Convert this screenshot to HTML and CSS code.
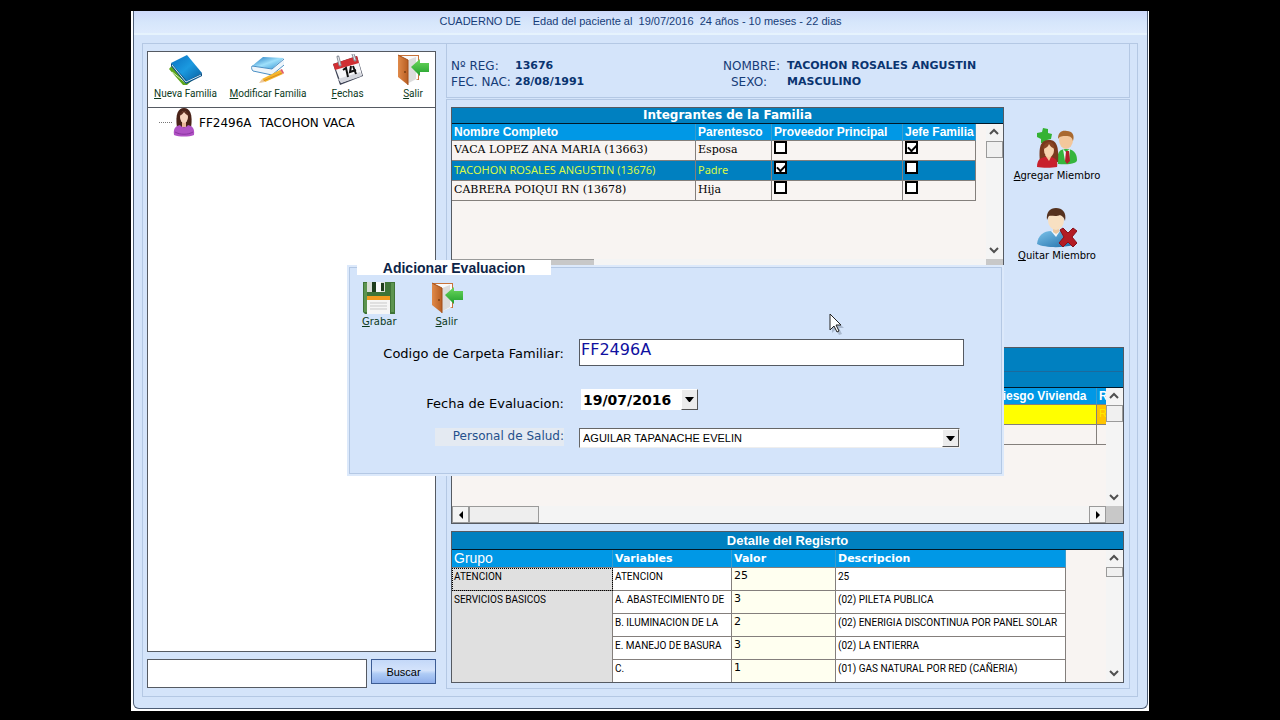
FILE: index.html
```html
<!DOCTYPE html>
<html lang="es">
<head>
<meta charset="utf-8">
<title>Carpeta Familiar</title>
<link rel="stylesheet" href="styles.css">
</head>
<body>
<svg class="defs" aria-hidden="true">
  <defs>
    <linearGradient id="blue" x1="0" y1="0" x2="1" y2="1"><stop offset="0" stop-color="#0a6fc0"/><stop offset=".5" stop-color="#1b9ae0"/><stop offset="1" stop-color="#075a9c"/></linearGradient>
    <linearGradient id="sky" x1="0" y1="0" x2="1" y2="1"><stop offset="0" stop-color="#1673bd"/><stop offset=".5" stop-color="#9fe0fb"/><stop offset="1" stop-color="#2a8fd0"/></linearGradient>
    <linearGradient id="wood" x1="0" y1="0" x2="1" y2="0"><stop offset="0" stop-color="#e08a4a"/><stop offset="1" stop-color="#b85e22"/></linearGradient>
    <linearGradient id="arrow" x1="0" y1="0" x2="0" y2="1"><stop offset="0" stop-color="#6fd95f"/><stop offset="1" stop-color="#1f9e2c"/></linearGradient>
    <linearGradient id="shirt" x1="0" y1="0" x2="1" y2="1"><stop offset="0" stop-color="#7cc3ea"/><stop offset="1" stop-color="#1e6da8"/></linearGradient>
  </defs>
  <symbol id="door" viewBox="0 0 32 32">
    <path d="M2 1h20v25H8z" fill="#c8733a"/><path d="M4 2h17v23l-9 4z" fill="#fafafa"/>
    <path d="M11 6l8-3v22l-9 5z" fill="#dcdcdc"/>
    <path d="M1 1l10 5v25l-10-8z" fill="url(#wood)"/><path d="M1 1l10 5v25" fill="none" stroke="#a34f18"/>
    <circle cx="8" cy="18" r="1" fill="#7a3c10"/>
    <path d="M14 13l9-8v4h9v9h-9v4z" fill="url(#arrow)"/>
  </symbol>
  <symbol id="up" viewBox="0 0 10 10"><path d="M1 7l4-4 4 4" fill="none" stroke="#505050" stroke-width="2"/></symbol>
  <symbol id="down" viewBox="0 0 10 10"><path d="M1 3l4 4 4-4" fill="none" stroke="#505050" stroke-width="2"/></symbol>
</svg>

<div class="window">
  <div class="surface">
    <header class="titlebar">
      <span>CUADERNO DE</span>
      <span>Edad del paciente al&nbsp; 19/07/2016&nbsp; 24 años - 10 meses - 22 dias</span>
    </header>

    <main class="frame">
      <section class="sidebar">
        <div class="tree">
          <nav class="toolbar">
            <button class="tool" type="button">
              <svg width="36" height="32" viewBox="0 0 36 32"><path d="M1 15l5-6 24 12-11 10-4 0z" fill="#5ea61c"/><path d="M4 18l14 11 12-8" fill="none" stroke="#d9efc0"/><path d="M3 9L19 1l15 18-15 9z" fill="url(#blue)"/><path d="M3 9v3l15 18 16-8v-3l-15 8z" fill="#084f86"/><path d="M4 11l14 17 15-7" fill="none" stroke="#cfe6f5"/></svg>
              <span><u>N</u>ueva Familia</span>
            </button>
            <button class="tool" type="button">
              <svg width="36" height="32" viewBox="0 0 36 32"><path d="M2 12L13 3l21 1-12 11z" fill="url(#sky)"/><path d="M2 12l20 3 12-11v6L22 21 3 17z" fill="#eef5fb"/><path d="M2 12l20 3 12-10M3 17l19 4 12-10M2 12c-1 2 0 4 1 5" fill="none" stroke="#4a8fc4"/><path d="M12 25l18-9 3 4-18 8z" fill="#f5b62c"/><path d="M13 27l19-8" stroke="#d98a1e"/><path d="M12 25l3 3-6 1z" fill="#edc89a"/><path d="M30 16l2-1 2 4-1 1z" fill="#e05a6a"/></svg>
              <span><u>M</u>odificar Familia</span>
            </button>
            <button class="tool" type="button">
              <svg width="32" height="32" viewBox="0 0 32 32"><path d="M1 10l24-8 6 20-23 9z" fill="#3c4254"/><path d="M3 13l23-7 4 15-21 8z" fill="#f7f7f9"/><path d="M1 10l24-8 2 7L3 16z" fill="#d02f33"/><path d="M6 25l22-7 2 4-21 7z" fill="#d5d7de"/><path d="M6 3l2 8M21 0l2 6" stroke="#8d939d" stroke-width="3" stroke-linecap="round"/><path d="M6 3l2 8M21 0l2 6" stroke="#eceef0"/><path d="M11 16l3-2 2 9M19 12l-1 6 6-2M21 12l3 8" fill="none" stroke="#111" stroke-width="2"/></svg>
              <span><u>F</u>echas</span>
            </button>
            <button class="tool tool-last" type="button">
              <svg width="32" height="32"><use href="#door"/></svg>
              <span><u>S</u>alir</span>
            </button>
          </nav>
          <div class="node">
            <i class="branch"></i>
            <svg width="22" height="29" viewBox="0 0 22 29"><path d="M4 20C2 6 5 0 11 0s9 6 7 20z" fill="#4a2318"/><path d="M9 13h4v6H9z" fill="#e9b598"/><ellipse cx="11" cy="9" rx="4" ry="6" fill="#f6d3bd"/><path d="M6 8c1-4 3-5 5-5s4 1 5 5c-3-1-4-3-5-4-1 2-3 3-5 4z" fill="#5b2c1e"/><path d="M1 27c-1-7 2-9 6-10 2 3 6 3 8 0 4 1 7 3 6 10-5 2-15 2-20 0z" fill="#b052c4"/><path d="M2 24c5 3 13 3 18 0" fill="none" stroke="#8c35a2"/></svg>
            <span>FF2496A&nbsp; TACOHON VACA</span>
          </div>
        </div>
        <form class="search">
          <input class="search-box" type="text" aria-label="Buscar familia">
          <button class="search-button" type="button">Buscar</button>
        </form>
      </section>

      <section class="record">
        <dl class="patient">
          <dt>Nº REG:</dt><dd>13676</dd><dt class="second">NOMBRE:</dt><dd>TACOHON ROSALES ANGUSTIN</dd>
          <dt>FEC. NAC:</dt><dd>28/08/1991</dd><dt class="second indent">SEXO:</dt><dd>MASCULINO</dd>
        </dl>

        <div class="groups">
          <div class="family">
            <section class="grid members">
              <h2 class="grid-title">Integrantes de la Familia</h2>
              <div class="grid-body">
                <div class="grid-view">
                  <table class="table members-table">
                    <colgroup><col class="m1"><col class="m2"><col class="m3"><col class="m4"></colgroup>
                    <thead><tr><th>Nombre Completo</th><th>Parentesco</th><th>Proveedor Principal</th><th>Jefe Familia</th></tr></thead>
                    <tbody>
                      <tr><td>VACA LOPEZ ANA MARIA (13663)</td><td>Esposa</td><td><input type="checkbox" aria-label="Proveedor principal"></td><td><input type="checkbox" checked aria-label="Jefe de familia"></td></tr>
                      <tr class="selected"><td>TACOHON ROSALES ANGUSTIN (13676)</td><td>Padre</td><td><input type="checkbox" checked aria-label="Proveedor principal"></td><td><input type="checkbox" aria-label="Jefe de familia"></td></tr>
                      <tr><td>CABRERA POIQUI RN (13678)</td><td>Hija</td><td><input type="checkbox" aria-label="Proveedor principal"></td><td><input type="checkbox" aria-label="Jefe de familia"></td></tr>
                    </tbody>
                  </table>
                </div>
                <div class="vscroll"><svg class="chev"><use href="#up"/></svg><i class="thumb"></i><svg class="chev end"><use href="#down"/></svg></div>
              </div>
              <div class="hscroll"><i class="strip"></i><i class="corner"></i></div>
            </section>
            <div class="actions">
              <button class="action" type="button">
                <svg width="40" height="40" viewBox="0 0 40 40"><path d="M0 5l5-1 1-4 5 1v4l4 1-1 5-4 1-1 4-5-1v-4L0 9z" fill="#34b233"/><path d="M21 36c-2-12 2-15 8-15s11 3 11 11c0 3-6 5-19 4z" fill="#36b53c"/><path d="M26 21l3 3 4-3-1 12h-4z" fill="#f3f6fb"/><path d="M29 23h3l1 10-3 3-2-3z" fill="#b3202a"/><ellipse cx="29" cy="12" rx="7" ry="9" fill="#f3c79b"/><path d="M21 11c0-7 4-9 9-8 5 0 8 4 6 10-1-4-3-5-7-5-4 0-6 0-8 3z" fill="#a9692f"/><path d="M3 34C1 16 5 12 12 12s10 5 9 22z" fill="#7a3a1e"/><path d="M0 39c0-7 3-9 8-10h6c5 1 7 4 6 10-5 1-15 1-20 0z" fill="#c8202c"/><path d="M8 27h7l-3 6z" fill="#f3c79b"/><ellipse cx="12" cy="22" rx="5" ry="7" fill="#f7d4ae"/><path d="M6 21c1-6 4-7 7-7 2 0 4 2 5 7-3-1-5-3-6-5-1 3-3 4-6 5z" fill="#8a4524"/></svg>
                <span><u>A</u>gregar Miembro</span>
              </button>
              <button class="action" type="button">
                <svg width="40" height="40" viewBox="0 0 40 40"><path d="M0 36c1-9 7-13 14-13h9c7 1 13 6 13 14-10 3-28 3-36-1z" fill="url(#shirt)"/><path d="M14 23h9l-4 6z" fill="#f0f5fa"/><path d="M16 18h6v6l-3 2-3-2z" fill="#ecc9a2"/><ellipse cx="19" cy="12" rx="8" ry="10" fill="#f8e0c2"/><path d="M10 12C9 4 13 0 19 0s11 4 9 13c-1-4-3-5-5-6-4 2-9 0-11 1-1 1-1 2-2 4z" fill="#55321f"/><path d="M23 22l3-2 5 5 5-5 4 3-5 6 5 6-4 4-5-5-5 5-4-4 5-6z" fill="#b31b24" stroke="#8a1018"/></svg>
                <span><u>Q</u>uitar Miembro</span>
              </button>
            </div>
          </div>

          <section class="grid visits">
            <div class="band"></div>
            <div class="grid-title band-low"></div>
            <div class="grid-body">
              <div class="grid-view">
                <table class="table visits-table">
                  <colgroup><col class="v1"><col class="v2"><col></colgroup>
                  <thead><tr><th></th><th>Riesgo Vivienda</th><th>R</th></tr></thead>
                  <tbody>
                    <tr class="flag"><td></td><td></td><td class="risk">R</td></tr>
                    <tr><td></td><td></td><td></td></tr>
                  </tbody>
                </table>
              </div>
              <div class="vscroll"><svg class="chev"><use href="#up"/></svg><i class="thumb"></i><svg class="chev end"><use href="#down"/></svg></div>
            </div>
            <div class="hscroll">
              <span class="step"><svg width="10" height="10"><path d="M7 1v8L3 5z"/></svg></span><i class="bar"></i>
              <span class="step far"><svg width="10" height="10"><path d="M3 1v8l4-4z"/></svg></span><i class="corner small"></i>
            </div>
          </section>

          <section class="grid detail">
            <h2 class="grid-title detail-title">Detalle del Regisrto</h2>
            <div class="grid-body">
              <div class="grid-view">
                <table class="table detail-table">
                  <colgroup><col class="d1"><col class="d2"><col class="d3"><col class="d4"></colgroup>
                  <thead><tr><th class="plain">Grupo</th><th>Variables</th><th>Valor</th><th>Descripcion</th></tr></thead>
                  <tbody>
                    <tr><th class="group focus" scope="row">ATENCION</th><td>ATENCION</td><td class="value">25</td><td>25</td></tr>
                    <tr><th class="group" scope="rowgroup" rowspan="4">SERVICIOS BASICOS</th><td>A. ABASTECIMIENTO DE</td><td class="value">3</td><td>(02) PILETA PUBLICA</td></tr>
                    <tr><td>B. ILUMINACION DE LA</td><td class="value">2</td><td>(02) ENERIGIA DISCONTINUA POR PANEL SOLAR</td></tr>
                    <tr><td>E. MANEJO DE BASURA</td><td class="value">3</td><td>(02) LA ENTIERRA</td></tr>
                    <tr><td>C.</td><td class="value">1</td><td>(01) GAS NATURAL POR RED (CAÑERIA)</td></tr>
                  </tbody>
                </table>
              </div>
              <div class="vscroll"><svg class="chev"><use href="#up"/></svg><i class="thumb short"></i><svg class="chev end"><use href="#down"/></svg></div>
            </div>
          </section>
        </div>
      </section>
    </main>

    <form class="dialog" role="dialog" aria-labelledby="dialog-title">
      <h2 class="dialog-title" id="dialog-title">Adicionar Evaluacion</h2>
      <div class="dialog-tools">
        <button class="tool wide" type="button">
          <svg width="32" height="32" viewBox="0 0 32 32"><path d="M0 0h32v32H2l-2-2z" fill="#3f7436"/><path d="M1 1h3v29H1zM28 1h3v29h-3z" fill="#5c9450"/><path d="M4 0h18v10H4z" fill="#d8ded6"/><path d="M9 0h4v10H9zM18 1h3v8h-3z" fill="#1f3d1c"/><path d="M13 0h5v10h-5z" fill="#fafafa"/><path d="M4 14h23v18H4z" fill="#f6f6f6"/><path d="M4 14h23v4H4z" fill="#f09a1e"/><path d="M7 21h17M7 24h17M7 27h17" stroke="#c9c9c9"/></svg>
          <span><u>G</u>rabar</span>
        </button>
        <button class="tool wide" type="button">
          <svg width="32" height="32"><use href="#door"/></svg>
          <span><u>S</u>alir</span>
        </button>
      </div>
      <div class="fields">
        <label for="code">Codigo de Carpeta Familiar:</label>
        <input class="code" id="code" type="text" value="FF2496A">
        <label for="date">Fecha de Evaluacion:</label>
        <div class="date"><input id="date" type="text" value="19/07/2016"><button class="drop" type="button" aria-label="Abrir calendario"><svg width="9" height="5"><path d="M0 0h9L5 5H4z"/></svg></button></div>
        <label class="staff-label" for="staff">Personal de Salud:</label>
        <div class="staff"><select id="staff"><option>AGUILAR TAPANACHE EVELIN</option></select><span class="drop over"><svg width="9" height="5"><path d="M0 0h9L5 5H4z"/></svg></span></div>
      </div>
    </form>

    <svg class="cursor" width="16" height="22" viewBox="0 0 16 22"><path d="M3 3v17l4-4 3 6 3-1-3-6h5z" fill="#8e9db3" opacity=".6"/><path d="M1 1v16l4-4 3 6 2-1-3-6h5z" fill="#fff" stroke="#222"/></svg>
  </div>
</div>
</body>
</html>
```
FILE: styles.css
```css
:root {
  --face: #d4e4fa;
  --line: #b4c8e4;
  --edge: #555a62;
  --cell: #847f7c;
  --paper: #f8f4f2;
  --band: #0080c0;
  --head: #0098e6;
  --navy: #163c78;
  --sans: "Liberation Sans", Arial, sans-serif;
  --wide: "DejaVu Sans", Verdana, sans-serif;
  --small: Roboto, "Liberation Sans", sans-serif;
}

* { box-sizing: border-box; }

body {
  margin: 0;
  min-height: 100vh;
  padding: 11px 131px 9px;
  display: flex;
  background: #000;
  font-family: var(--sans);
  font-size: 12px;
  color: #000;
}

button { margin: 0; padding: 0; border: 0; background: none; font: inherit; color: inherit; }
input, select { margin: 0; border-radius: 0; }
h2, dl, dd { margin: 0; }
svg { display: block; }
.defs { position: absolute; width: 0; height: 0; }

.window { flex: 1; display: flex; padding: 0 1px 2px 2px; background: #fff; }

.surface {
  position: relative;
  flex: 1;
  display: flex;
  flex-direction: column;
  border: 1px solid #4c5c74;
  border-top: 0;
  border-radius: 0 0 6px 6px;
  background: var(--face);
}

.titlebar {
  display: flex;
  justify-content: center;
  gap: 12px;
  height: 24px;
  font-size: 11px;
  line-height: 20px;
  border-bottom: 2px solid #e6f3fd;
  background: linear-gradient(#cdd9fa, #d6e6fb 50%, #deebfd);
  color: var(--navy);
}

.frame {
  flex: 1;
  display: grid;
  grid-template-columns: 289px 1fr;
  gap: 10px;
  margin: 8px 9px 11px 8px;
  padding: 0 7px 7px 4px;
  border: 1px solid var(--line);
}

.sidebar { display: flex; flex-direction: column; gap: 7px; padding: 7px 0 1px; }
.tree { flex: 1; border: 1px solid var(--edge); background: #fff; }

.toolbar {
  display: grid;
  grid-template-columns: 75fr 90fr 69fr 53fr;
  padding-top: 2px;
  height: 56px;
  border-bottom: 1px solid var(--edge);
}

.tool {
  display: flex;
  flex-direction: column;
  align-items: center;
  gap: 1px;
  font-family: var(--small);
  font-size: 10px;
  line-height: 14px;
  color: #0c3a1c;
  white-space: nowrap;
}
.tool-last { justify-self: end; margin-right: 6px; }
.tool.wide { font-family: var(--wide); }

.node { display: flex; align-items: center; padding-left: 11px; gap: 1px; font-family: var(--wide); font-size: 12px; }
.node span { padding-left: 3px; }
.branch { width: 13px; border-top: 1px dotted #777; }

.search { display: flex; align-items: flex-start; gap: 4px; height: 29px; }
.search-box { flex: 1; min-width: 0; height: 29px; border: 1px solid var(--edge); background: #fff; }
.search-button {
  width: 65px;
  height: 25px;
  border: 1px solid #3c5c94;
  background: linear-gradient(#c4d8f8, #d4e3fb 45%, #aecbf5 60%, #8fb0ec);
  font-size: 11px;
}

.record { display: flex; flex-direction: column; gap: 1px; }

.patient {
  display: grid;
  grid-template-columns: 64px 208px 64px 1fr;
  align-content: start;
  height: 54px;
  padding: 14px 0 0 4px;
  border: 1px solid var(--line);
  border-top: 0;
  font-family: var(--wide);
  font-size: 11px;
  line-height: 16px;
  color: var(--navy);
  white-space: nowrap;
}
.patient dt { font-size: 12px; }
.patient dd { font-weight: bold; color: #0a3470; }
.indent { padding-left: 8px; }

.groups {
  flex: 1;
  display: flex;
  flex-direction: column;
  padding: 7px 5px 5px 4px;
  border: 1px solid var(--line);
}

.family { flex: 1; display: flex; align-items: flex-start; }

.grid { display: flex; flex-direction: column; border: 1px solid var(--edge); background: var(--paper); }
.members { flex: 1; height: 170px; }
.visits { height: 177px; margin-bottom: 7px; }
.detail { height: 152px; }

.grid-title {
  height: 16px;
  border-bottom: 1px solid #001828;
  background: var(--band);
  color: #fff;
  font-family: var(--wide);
  font-size: 12px;
  line-height: 15px;
  text-align: center;
}
.detail-title { height: 18px; font-family: var(--sans); font-size: 13px; line-height: 17px; }
.band { height: 24px; border-bottom: 1px solid #1c6a9c; background: var(--band); }

.grid-body { flex: 1; display: flex; min-height: 0; }
.grid-view { flex: 1; min-width: 0; overflow: hidden; }

.vscroll {
  display: flex;
  flex-direction: column;
  width: 17px;
  background: #f4f4f4;
}
.chev { width: 10px; height: 10px; margin: 3px 3px 4px; }
.chev.end { margin-top: auto; }
.thumb { height: 17px; border: 1px solid #9a9a9a; background: #f0f0f0; }
.thumb.short { height: 10px; }
.hscroll { display: flex; height: 17px; background: #f4f4f4; }
.strip { width: 142px; border-top: 1px solid #9a9a9a; background: #c8c8c8; }
.corner { width: 17px; margin-left: auto; background: #c8c8c8; }
.corner.small { margin-left: 0; }
.step { display: grid; place-items: center; width: 17px; border: 1px solid #9a9a9a; background: #f4f4f4; }
.step.far { margin-left: auto; }
.bar { width: 70px; border: 1px solid #9a9a9a; background: #eee; }

.table { table-layout: fixed; border-collapse: separate; border-spacing: 0; }
.table th, .table td {
  padding: 0 2px;
  overflow: hidden;
  border-right: 1px solid var(--cell);
  border-bottom: 1px solid var(--cell);
  text-align: left;
  vertical-align: top;
  white-space: nowrap;
}
.table thead th { height: 17px; background: var(--head); color: #fff; line-height: 16px; border-right-color: #3c9ccc; }

.members-table { width: 524px; }
.m1 { width: 244px; }
.m2 { width: 76px; }
.m3 { width: 131px; }
.m4 { width: 73px; }
.members-table td { height: 20px; font-family: "DejaVu Serif", serif; font-size: 11px; line-height: 18px; }
.members-table .selected td { background: var(--band); color: #d8f848; font-family: "Noto Sans", sans-serif; font-size: 11px; line-height: 17px; }

input[type="checkbox"] {
  appearance: none;
  display: block;
  width: 13px;
  height: 13px;
  border: 2px solid #000;
  background: #fff;
}
input[type="checkbox"]:checked::after {
  content: "";
  display: block;
  width: 7px;
  height: 4px;
  margin: 1px;
  border: solid #000;
  border-width: 0 0 2px 2px;
  transform: rotate(-45deg);
}

.visits-table { width: 100%; }
.v1 { width: 540px; }
.v2 { width: 105px; }
.visits-table td { height: 20px; line-height: 16px; }
.table.visits-table th:last-child, .table.visits-table td:last-child { padding-right: 0; border-right: 0; }
.flag td { background: #ff0; }
.flag .risk { background: #ffc400; color: #ffe800; font-size: 11px; }

.detail-table { width: 614px; }
.d1 { width: 161px; }
.d2 { width: 119px; }
.d3 { width: 104px; }
.d4 { width: 230px; }
.table.detail-table thead th { height: 18px; font-family: var(--wide); font-size: 11px; line-height: 17px; }
.table.detail-table thead .plain { font-family: var(--sans); font-size: 14px; font-weight: normal; }
.detail-table td, .detail-table .group { height: 23px; background: #fff; font-family: var(--small); font-size: 10px; font-weight: normal; line-height: 18px; }
.table .value { background: #fffff0; font-family: var(--wide); font-size: 11px; line-height: 16px; }
.detail-table .group { background: #e0e0e0; }
.table .focus { outline: 1px dotted #000; outline-offset: -1px; }

.actions { display: flex; flex-direction: column; align-items: center; gap: 25px; width: 120px; padding: 21px 14px 0 0; }
.action {
  display: flex;
  flex-direction: column;
  align-items: center;
  font-family: var(--wide);
  font-size: 10px;
  line-height: 15px;
  white-space: nowrap;
}

.dialog {
  position: absolute;
  top: 254px;
  left: 213px;
  width: 657px;
  padding: 2px;
  background: #dce9fb;
}
.dialog::before {
  content: "";
  position: absolute;
  inset: 2px;
  border: 1px solid var(--line);
  background: var(--face);
}
.dialog-title {
  position: absolute;
  top: -5px;
  left: 10px;
  width: 194px;
  height: 15px;
  background: #fff;
  color: #0c2448;
  font-size: 14px;
  line-height: 16px;
  text-align: center;
}
.dialog-tools { position: relative; display: flex; gap: 34px; padding: 15px 0 0 13px; }

.fields {
  position: relative;
  display: grid;
  grid-template-columns: 215px 385px;
  column-gap: 15px;
  align-items: start;
  padding: 10px 0 26px;
  font-family: var(--wide);
  font-size: 13px;
  line-height: 18px;
  text-align: right;
}
.fields > label { padding-top: 6px; }
.code {
  height: 27px;
  margin-bottom: 23px;
  padding: 0 1px 6px;
  border: 1px solid var(--edge);
  background: #fff;
  color: #1010a0;
  font: 16px/20px var(--wide);
}
.date { display: flex; width: 117px; height: 21px; margin: 0 0 18px 2px; background: #fff; }
.date input { flex: 1; min-width: 0; padding: 0 2px; border: 0; background: none; font: bold 14px/20px var(--wide); }
.drop {
  display: grid;
  place-items: center;
  width: 17px;
  border: 1px solid;
  border-color: #fff #555 #555 #fff;
  background: #ececec;
}
.fields > .staff-label {
  justify-self: end;
  width: 129px;
  height: 18px;
  padding: 0;
  background: #e4eaf2;
  color: #24508c;
  font-size: 12px;
  line-height: 16px;
}
.staff { position: relative; width: 381px; }
.staff select {
  display: block;
  appearance: none;
  width: 100%;
  height: 20px;
  padding: 0 3px;
  border: 1px solid;
  border-color: #666 #eee #eee #666;
  background: #fff;
  color: #000;
  font: 11px/18px var(--sans);
}
.over { position: absolute; top: 1px; right: 1px; bottom: 1px; pointer-events: none; }

.cursor { position: absolute; top: 302px; left: 695px; }
```
